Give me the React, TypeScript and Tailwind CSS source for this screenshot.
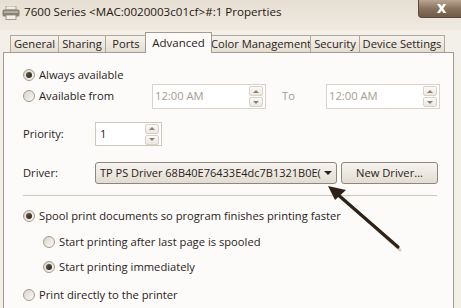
import React from 'react';

function Radio({ checked }: { checked?: boolean }) {
  return (
    <div className="w-[12px] h-[12px] rounded-full border border-[#a39a8e] bg-gradient-to-br from-[#d9d3ca] to-[#fbfaf8] flex items-center justify-center shrink-0">
      {checked && <div className="w-[6px] h-[6px] rounded-full bg-gradient-to-br from-[#6b5d4e] to-[#2a2119]" />}
    </div>
  );
}

function Spin() {
  return (
    <div className="flex flex-col gap-[1px] mr-[2px]">
      <div className="w-[14px] h-[10px] border border-[#d8d2c8] rounded-[2px] bg-gradient-to-b from-[#fbfaf8] to-[#ece7df] flex items-center justify-center">
        <div className="w-0 h-0 border-l-[3px] border-r-[3px] border-b-[3px] border-l-transparent border-r-transparent border-b-[#8a8074]" />
      </div>
      <div className="w-[14px] h-[10px] border border-[#d8d2c8] rounded-[2px] bg-gradient-to-b from-[#fbfaf8] to-[#ece7df] flex items-center justify-center">
        <div className="w-0 h-0 border-l-[3px] border-r-[3px] border-t-[3px] border-l-transparent border-r-transparent border-t-[#8a8074]" />
      </div>
    </div>
  );
}

function Tab({ label, w, active }: { label: string; w: string; active?: boolean }) {
  if (active) {
    return (
      <div className={`${w} h-[21px] -mb-[1px] mx-[-1px] relative z-10 border border-b-0 border-[#a59a8c] bg-[#fcfbf9] flex items-start justify-center pt-[1px] text-[11.5px] whitespace-nowrap text-[#2b2219]`}>
        {label}
      </div>
    );
  }
  return (
    <div className={`${w} h-[17px] border border-b-0 border-r-0 border-[#b3a898] bg-gradient-to-b from-[#f6f3ee] to-[#e4ddd2] flex items-center justify-center text-[11.2px] whitespace-nowrap text-[#2b2219] last:border-r`}>
      {label}
    </div>
  );
}

export default function App() {
  return (
    <div className="w-[461px] h-[308px] overflow-hidden bg-[#f3efe9] relative text-[#2b2219]" style={{ fontFamily: '"Open Sans", "Noto Sans", sans-serif' }}>
      {/* title bar */}
      <div className="h-[30px] flex items-start bg-gradient-to-b from-[#e7dfd3] to-[#efe9e0]">
        <svg width="18" height="14" viewBox="0 0 18 14" className="ml-[2px] mt-[6px]">
          <rect x="4" y="0" width="10" height="4" fill="#efece6" stroke="#9d9488" strokeWidth="0.8" />
          <rect x="0.5" y="3.5" width="17" height="7" rx="1.5" fill="#8b8276" />
          <rect x="2" y="5" width="14" height="2" fill="#b5ada2" />
          <rect x="4" y="9" width="10" height="4.5" fill="#f4f1ec" stroke="#8d8478" strokeWidth="0.8" />
        </svg>
        <div className="ml-[4px] mt-[3px] text-[11.6px] leading-[18px] text-[#1f1812] whitespace-nowrap">
          7600 Series &lt;MAC:0020003c01cf&gt;#:1 Properties
        </div>
        <div className="ml-auto mr-[-4px] w-[47px] h-[18px] rounded-b-[4px] border border-t-0 border-[#5a4838] bg-gradient-to-b from-[#b9a692] via-[#8a735e] to-[#6e5a48] flex items-center justify-center">
          <span className="text-white text-[15px] font-bold leading-none" style={{ fontFamily: '"DejaVu Sans", sans-serif' }}>x</span>
        </div>
      </div>

      {/* tabs */}
      <div className="h-[22px] flex items-end pl-[10px]">
        <Tab label="General" w="w-[48px]" />
        <Tab label="Sharing" w="w-[47px]" />
        <Tab label="Ports" w="w-[41px]" />
        <Tab label="Advanced" w="w-[67px]" active />
        <Tab label="Color Management" w="w-[99px]" />
        <Tab label="Security" w="w-[49px]" />
        <Tab label="Device Settings" w="w-[86px]" />
      </div>

      {/* panel */}
      <div className="ml-[3px] w-[451px] h-[260px] border border-b-0 border-[#a59a8c] bg-[#fcfbf9] text-[11.2px] pl-[19px] flex flex-col">
        <div className="mt-[13px] h-[18px] flex items-center gap-[4px]">
          <Radio checked />
          <span>Always available</span>
        </div>
        <div className="h-[25px] flex items-center">
          <div className="w-[129px] flex items-center gap-[4px]">
            <Radio />
            <span>Available from</span>
          </div>
          <div className="w-[114px] h-[25px] border border-[#d9d3c9] bg-white flex items-center justify-between">
            <span className="pl-[2px] text-[#a59c90]">12:00 AM</span>
            <Spin />
          </div>
          <span className="ml-[16px] w-[44px] text-[#a59c90]">To</span>
          <div className="w-[114px] h-[25px] border border-[#d9d3c9] bg-white flex items-center justify-between">
            <span className="pl-[2px] text-[#a59c90]">12:00 AM</span>
            <Spin />
          </div>
        </div>
        <div className="mt-[13px] h-[24px] flex items-center">
          <span className="w-[72px]">Priority:</span>
          <div className="w-[67px] h-[24px] border border-[#cfc8bc] bg-white flex items-center justify-between">
            <span className="pl-[4px]">1</span>
            <Spin />
          </div>
        </div>
        <div className="mt-[16px] h-[22px] flex items-center">
          <span className="w-[72px]">Driver:</span>
          <div className="w-[242px] h-[22px] rounded-[3px] border border-[#8f8578] bg-gradient-to-b from-[#f7f5f1] to-[#e2dcd2] flex items-center">
            <span className="pl-[4px] whitespace-nowrap text-[11px] w-[228px]">TP PS Driver 68B40E76433E4dc7B1321B0E(</span>
            <div className="w-0 h-0 border-l-[4px] border-r-[4px] border-t-[4px] border-l-transparent border-r-transparent border-t-[#2b2219]" />
          </div>
          <div className="ml-[4px] w-[97px] h-[22px] rounded-[3px] border border-[#8f8578] bg-gradient-to-b from-[#f7f5f1] to-[#e2dcd2] flex items-center justify-center">
            New Driver...
          </div>
        </div>
        <div className="mt-[11px] w-[414px] h-[1px] bg-[#cfc8bd]" />
        <div className="mt-[10px] h-[20px] flex items-center gap-[4px]">
          <Radio checked />
          <span>Spool print documents so program finishes printing faster</span>
        </div>
        <div className="mt-[6px] ml-[20px] h-[20px] flex items-center gap-[4px]">
          <Radio />
          <span>Start printing after last page is spooled</span>
        </div>
        <div className="mt-[5px] ml-[20px] h-[20px] flex items-center gap-[4px]">
          <Radio checked />
          <span>Start printing immediately</span>
        </div>
        <div className="mt-[8px] h-[20px] flex items-center gap-[4px]">
          <Radio />
          <span>Print directly to the printer</span>
        </div>
      </div>

      {/* annotation arrow */}
      <svg className="absolute left-0 top-0 pointer-events-none" width="461" height="308" viewBox="0 0 461 308">
        <line x1="400" y1="250" x2="340" y2="196" stroke="#d2c9bd" strokeWidth="3" strokeLinecap="round" />
        <line x1="398" y1="247" x2="336" y2="193" stroke="#2e2118" strokeWidth="3.2" strokeLinecap="round" />
        <polygon points="328,186 346,190 335,200" fill="#2e2118" />
      </svg>
    </div>
  );
}
